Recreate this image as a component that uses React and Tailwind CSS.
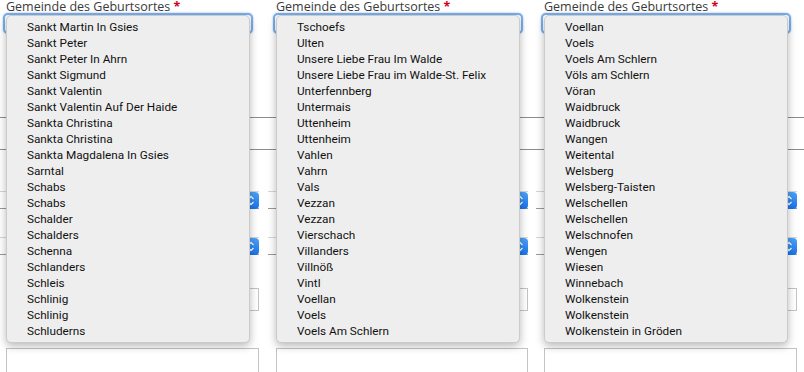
import React from "react";

const columns = [
  {
    wrap: "ml-[6px] w-[253px]",
    items: [
      "Sankt Martin In Gsies",
      "Sankt Peter",
      "Sankt Peter In Ahrn",
      "Sankt Sigmund",
      "Sankt Valentin",
      "Sankt Valentin Auf Der Haide",
      "Sankta Christina",
      "Sankta Christina",
      "Sankta Magdalena In Gsies",
      "Sarntal",
      "Schabs",
      "Schabs",
      "Schalder",
      "Schalders",
      "Schenna",
      "Schlanders",
      "Schleis",
      "Schlinig",
      "Schlinig",
      "Schluderns",
    ],
  },
  {
    wrap: "ml-[17px] w-[252px]",
    items: [
      "Tschoefs",
      "Ulten",
      "Unsere Liebe Frau Im Walde",
      "Unsere Liebe Frau im Walde-St. Felix",
      "Unterfennberg",
      "Untermais",
      "Uttenheim",
      "Uttenheim",
      "Vahlen",
      "Vahrn",
      "Vals",
      "Vezzan",
      "Vezzan",
      "Vierschach",
      "Villanders",
      "Villnöß",
      "Vintl",
      "Voellan",
      "Voels",
      "Voels Am Schlern",
    ],
  },
  {
    wrap: "ml-[16px] w-[253px]",
    items: [
      "Voellan",
      "Voels",
      "Voels Am Schlern",
      "Völs am Schlern",
      "Vöran",
      "Waidbruck",
      "Waidbruck",
      "Wangen",
      "Weitental",
      "Welsberg",
      "Welsberg-Taisten",
      "Welschellen",
      "Welschellen",
      "Welschnofen",
      "Wengen",
      "Wiesen",
      "Winnebach",
      "Wolkenstein",
      "Wolkenstein",
      "Wolkenstein in Gröden",
    ],
  },
];

const PopupSelect = ({ className = "" }) => (
  <div
    className={`ml-[-8px] h-[18px] border-t border-b border-t-[#d6d6d6] border-b-[#9a9a9a] flex justify-end items-center ${className}`}
  >
    <div className="h-[17px] w-[16px] rounded-[4px] bg-gradient-to-b from-[#4ea2f7] to-[#1672ea] flex items-center justify-center">
      <svg width="8" height="11" viewBox="0 0 8 11" fill="none">
        <path d="M1.5 4 L4 1.5 L6.5 4" stroke="white" strokeWidth="1.3" />
        <path d="M1.5 7 L4 9.5 L6.5 7" stroke="white" strokeWidth="1.3" />
      </svg>
    </div>
  </div>
);

const App = () => {
  return (
    <div className="relative w-[804px] h-[372px] overflow-hidden bg-white font-['Liberation_Sans',sans-serif]">
      {/* form behind the open menus */}
      <div className="flex">
        {columns.map((col, i) => (
          <div key={i} className={col.wrap}>
            <div className="h-[13px] pt-[1px] leading-[12px] text-[12.5px] text-[#3a3a3a] whitespace-nowrap font-['Open_Sans',sans-serif]">
              Gemeinde des Geburtsortes <span className="text-[#d0021b] font-bold">*</span>
            </div>
            <div className="ml-[-3px] w-[250px] h-[21px] rounded-[5px] border-2 border-[#7aaeee] bg-white shadow-[0_0_2px_#9cc3f2]" />
          </div>
        ))}
      </div>

      <div className="mt-[83px] h-[33px] border-y border-[#8c8c8c]" />

      <div className="flex">
        {columns.map((col, i) => (
          <div key={i} className={col.wrap}>
            <PopupSelect className="mt-[41px]" />
            <PopupSelect className="mt-[28px]" />
            <div className="mt-[33px] h-[23px] border border-[#c4c4c4] bg-white" />
            <div className="mt-[37px] h-[26px] border border-[#c4c4c4] bg-white" />
          </div>
        ))}
      </div>

      {/* open dropdown menus */}
      <div className="absolute inset-0 flex">
        {columns.map((col, i) => (
          <div key={i} className={col.wrap}>
            <div className="mt-[15px] w-[244px] h-[328px] pt-[3px] rounded-[5px] border border-[#cbcbcb] bg-[#eeeeee] shadow-[0_3px_9px_rgba(0,0,0,0.28)]">
              {col.items.map((name, j) => (
                <div
                  key={j}
                  className="h-[16px] leading-[16px] pl-[20px] text-[11.75px] text-[#111111] whitespace-nowrap font-['Roboto',sans-serif]"
                >
                  {name}
                </div>
              ))}
            </div>
          </div>
        ))}
      </div>
    </div>
  );
};

export default App;
